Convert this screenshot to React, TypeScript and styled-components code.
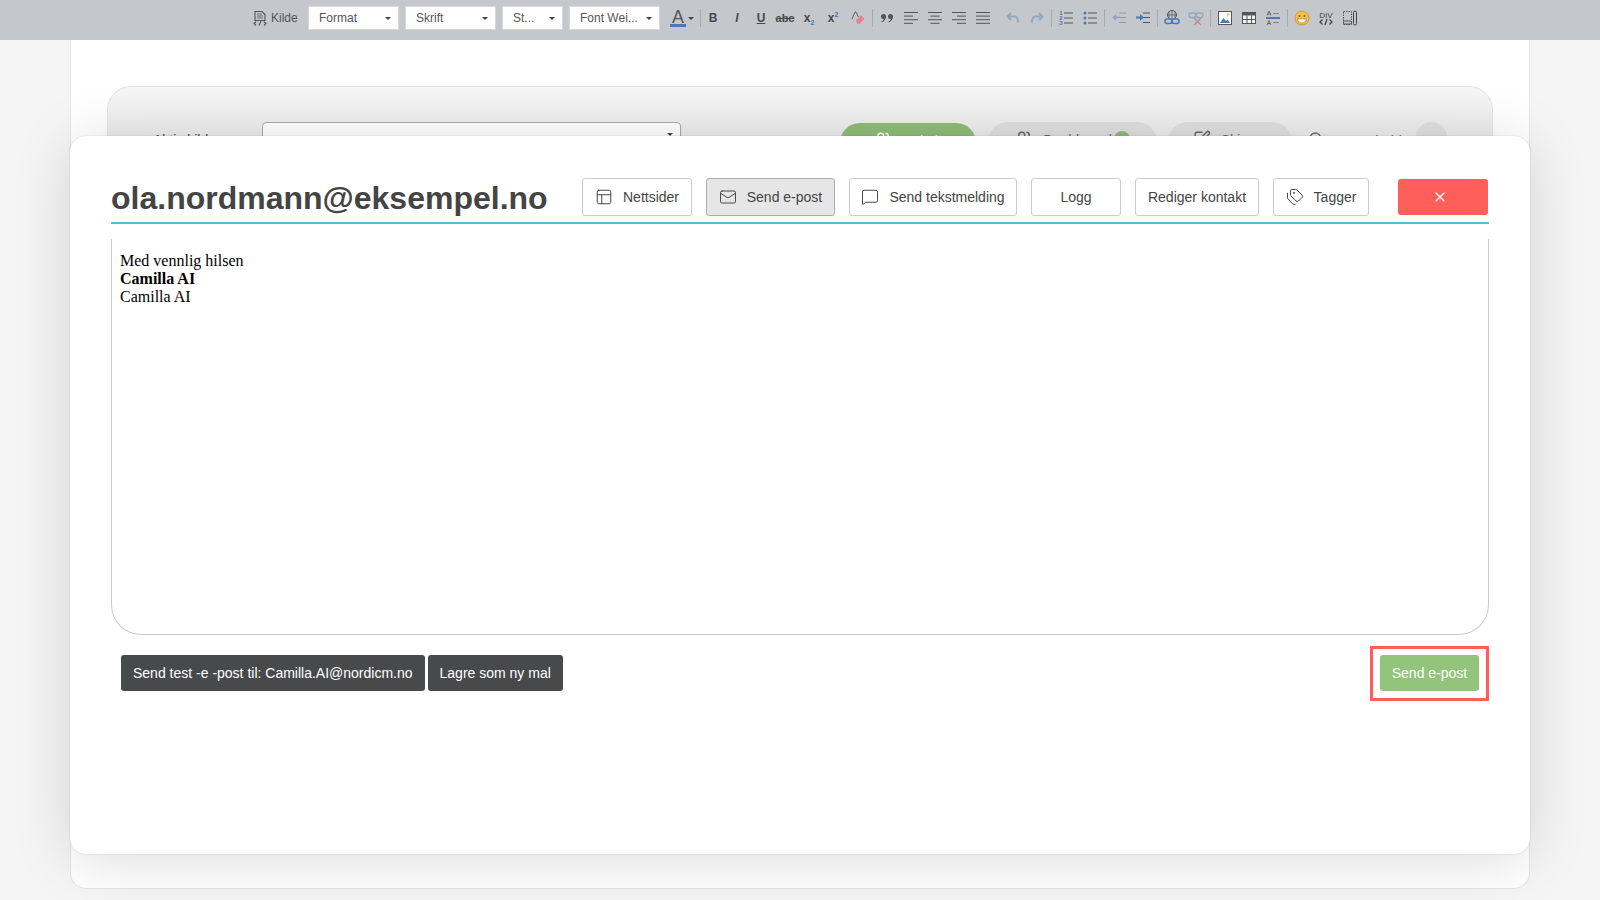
import { ReactNode } from 'react'
import styled, { createGlobalStyle } from 'styled-components'
import { PanelsTopLeft, Mail, MessageSquare, Tags, Users, X, SquarePen, Search } from 'lucide-react'

const GlobalStyle = createGlobalStyle`
  html, body {
    margin: 0;
    height: 100%;
    background: #f5f5f5;
    font-family: "Liberation Sans", Arial, sans-serif;
    overflow: hidden;
  }
`

const Page = styled.div`
  position: relative;
  display: flex;
  flex-direction: column;
  height: 900px;
  width: 1600px;
  overflow: hidden;
`

const Toolbar = styled.div`
  display: flex;
  align-items: center;
  box-sizing: border-box;
  height: 40px;
  padding: 0 0 4px 252px;
  background: #c4c8cd;
  flex-shrink: 0;
  color: #555;
  position: relative;
  z-index: 2;
`

const SourceButton = styled.div`
  display: flex;
  align-items: center;
  gap: 3px;
  width: 56px;
  font-size: 12px;
  color: #555;
`

const Combo = styled.div<{ $w: number }>`
  display: flex;
  align-items: center;
  justify-content: space-between;
  box-sizing: border-box;
  width: ${p => p.$w}px;
  height: 24px;
  margin-right: 6px;
  padding: 0 7px 0 10px;
  background: #fff;
  border: 1px solid #d6d8db;
  font-size: 12px;
  color: #555;
  white-space: nowrap;
`

const Caret = styled.span`
  width: 0;
  height: 0;
  border-left: 3px solid transparent;
  border-right: 3px solid transparent;
  border-top: 3px solid #444;
`

const ColorButton = styled.div`
  display: flex;
  align-items: center;
  gap: 2px;
  width: 32px;
  padding-left: 4px;
  box-sizing: border-box;
`

const ColorLetter = styled.span`
  padding: 0 2px;
  font-size: 18px;
  line-height: 14px;
  color: #555;
  border-bottom: 3px solid #4a79b3;
`

const Sep = styled.span<{ $hidden?: boolean; $wide?: boolean; $flush?: boolean }>`
  width: 1px;
  height: 18px;
  margin: 0 ${p => (p.$flush ? 0 : 2)}px 0 ${p => (p.$wide ? 3 : 2)}px;
  background: ${p => (p.$hidden ? 'transparent' : '#a6a9ad')};
`

const Cell = styled.div<{ $off?: boolean }>`
  display: flex;
  align-items: center;
  justify-content: center;
  width: 24px;
  height: 24px;
  opacity: ${p => (p.$off ? 0.4 : 1)};

  svg {
    display: block;
  }
`

const GlyphText = styled.span<{ $italic?: boolean; $under?: boolean; $strike?: boolean }>`
  font-family: "Liberation Sans", Arial, sans-serif;
  font-size: ${p => (p.$strike ? 11 : 12)}px;
  font-weight: 700;
  line-height: 14px;
  color: #4a4a4a;
  font-style: ${p => (p.$italic ? 'italic' : 'normal')};
  text-decoration: ${p => (p.$under ? 'underline' : p.$strike ? 'line-through' : 'none')};
`

const Script = styled.span`
  font-size: 12px;
  font-weight: 700;
  color: #4a4a4a;
  sub, sup {
    font-size: 7px;
    color: #4a79b3;
    line-height: 0;
  }
`

const Panel = styled.div`
  box-sizing: border-box;
  width: 1460px;
  height: 849px;
  margin-left: 70px;
  padding: 46px 36px 0;
  background: #fff;
  border: 1px solid #e4e5ea;
  border-top: 0;
  border-radius: 0 0 16px 16px;
`

const Card = styled.div`
  display: flex;
  align-items: flex-start;
  height: 200px;
  padding: 35px 0 0 45px;
  background: linear-gradient(#f6f6f6, #e9e9e9 60px);
  border: 1px solid #e2e3e8;
  border-radius: 24px 24px 0 0;
`

const FieldLabel = styled.span`
  width: 109px;
  margin-top: 10px;
  font-size: 14px;
  color: #444;
`

const FakeSelect = styled.div`
  display: flex;
  justify-content: flex-end;
  box-sizing: border-box;
  width: 419px;
  height: 36px;
  margin-right: 159px;
  padding: 10px 7px 0 0;
  background: #fff;
  border: 1px solid #a9a9a9;
  border-radius: 4px;
`

const Pill = styled.div<{ $w: number; $on?: boolean; $tight?: boolean }>`
  display: flex;
  align-items: flex-start;
  justify-content: center;
  gap: 10px;
  box-sizing: border-box;
  width: ${p => p.$w}px;
  height: 40px;
  margin-top: ${p => (p.$on ? 1 : 0)}px;
  margin-right: ${p => (p.$tight ? 11 : 12)}px;
  padding-top: 8px;
  border-radius: 20px;
  background: ${p => (p.$on ? '#8fbc78' : '#dfdfdf')};
  color: ${p => (p.$on ? '#fff' : '#666')};
  font-size: 14px;
`

const PillText = styled.span`
  margin-top: 2px;
`

const Badge = styled.span`
  width: 16px;
  height: 16px;
  margin-top: 1px;
  margin-left: -8px;
  border-radius: 50%;
  background: #8fbc78;
`

const PlainLink = styled.div`
  display: flex;
  align-items: flex-start;
  gap: 10px;
  margin: 9px 0 0 4px;
  width: 108px;
  font-size: 14px;
  color: #666;
`

const RoundButton = styled.div`
  width: 31px;
  height: 40px;
  border-radius: 16px;
  background: #dfdfdf;
`

const Modal = styled.div`
  position: absolute;
  left: 70px;
  top: 136px;
  display: flex;
  flex-direction: column;
  box-sizing: border-box;
  width: 1460px;
  height: 718px;
  padding: 42px 41px 0 41px;
  background: #fff;
  border-radius: 16px;
  box-shadow: 0 0 2px rgba(60, 70, 110, 0.2), 0 6px 60px rgba(0, 0, 0, 0.14);
`

const Header = styled.div`
  display: flex;
  align-items: flex-start;
  gap: 14px;
  height: 44px;
  border-bottom: 2px solid #5bbcd8;
`

const Title = styled.h1`
  flex: 1;
  margin: 0;
  font-size: 32px;
  line-height: 40px;
  font-weight: 700;
  color: #444;
  white-space: nowrap;
`

const HeadButton = styled.button<{ $w: number; $active?: boolean }>`
  display: flex;
  align-items: center;
  justify-content: center;
  gap: 10px;
  box-sizing: border-box;
  width: ${p => p.$w}px;
  height: 38px;
  padding: 0;
  background: ${p => (p.$active ? '#e6e6e6' : '#fff')};
  border: 1px solid ${p => (p.$active ? '#adadad' : '#ccc')};
  border-radius: 3px;
  color: #444;
  font-family: inherit;
  font-size: 14px;
`

const CloseButton = styled.button`
  display: flex;
  align-items: center;
  justify-content: center;
  width: 90px;
  height: 36px;
  margin: 1px 1px 0 15px;
  padding: 0 7px 0 0;
  background: #ff5f5a;
  border: 0;
  border-radius: 3px;
  color: #fff;
`

const Editor = styled.div`
  box-sizing: border-box;
  height: 396px;
  margin-top: 15px;
  padding: 13px 8px 0;
  background: #fff;
  border: 1px solid #ccc;
  border-top: 0;
  border-radius: 0 0 30px 30px;
  font-family: "Liberation Serif", "Times New Roman", serif;
  font-size: 16px;
  line-height: 18px;
  color: #000;
`

const Footer = styled.div`
  display: flex;
  align-items: flex-start;
  justify-content: space-between;
  margin-top: 11px;
  padding-left: 10px;
`

const ButtonGroup = styled.div`
  display: flex;
  gap: 3px;
  margin-top: 9px;
`

const ActionButton = styled.button<{ $green?: boolean }>`
  height: 36px;
  padding: 0 12px;
  background: ${p => (p.$green ? '#92c47c' : '#48494b')};
  border: 0;
  border-radius: 3px;
  color: #fff;
  font-family: inherit;
  font-size: 14px;
  white-space: nowrap;
`

const Highlight = styled.div`
  display: flex;
  box-sizing: border-box;
  width: 119px;
  height: 55px;
  padding-top: 6px;
  align-items: flex-start;
  justify-content: center;
  border: 3px solid #ff5f5a;
`

const stroke = { fill: 'none', stroke: '#555', strokeWidth: 1.1 }
const blue = '#4a79b3'

const Icon = ({ children, size = 16 }: { children: ReactNode; size?: number }) => (
  <svg width={size} height={size} viewBox='0 0 16 16'>
    {children}
  </svg>
)

const Lines = ({ rows }: { rows: [number, number][] }) => (
  <Icon>
    {rows.map(([x, w], i) => (
      <rect key={i} x={x} y={2 + i * 3.6} width={w} height='1' fill='#555' />
    ))}
  </Icon>
)

const ListRows = () => (
  <>
    <rect x='6' y='2.5' width='9' height='1' fill='#555' />
    <rect x='6' y='7.5' width='9' height='1' fill='#555' />
    <rect x='6' y='12.5' width='9' height='1' fill='#555' />
  </>
)

const Digit = ({ y, n }: { y: number; n: number }) => (
  <text x='3' y={y} textAnchor='middle' fontSize='6' fontWeight='700' fontFamily='Liberation Sans' fill={blue}>
    {n}
  </text>
)

function App() {
  return (
    <>
      <GlobalStyle />
      <Page>
        <Toolbar>
          <SourceButton>
            <Icon>
              <path d='M3 1.5h7l3 3v6H3z' {...stroke} />
              <path d='M5 4h5M5 6h6M5 8h6' {...stroke} strokeWidth={0.8} />
              <path d='M4 11.5l-2 2 2 2M12 11.5l2 2-2 2M9 11l-2 4.5' {...stroke} />
            </Icon>
            Kilde
          </SourceButton>
          <Combo $w={91}>Format<Caret /></Combo>
          <Combo $w={91}>Skrift<Caret /></Combo>
          <Combo $w={61}>St...<Caret /></Combo>
          <Combo $w={91}>Font Wei...<Caret /></Combo>
          <ColorButton>
            <ColorLetter>A</ColorLetter>
            <Caret />
          </ColorButton>
          <Sep $flush />
          <Cell><GlyphText>B</GlyphText></Cell>
          <Cell><GlyphText $italic>I</GlyphText></Cell>
          <Cell><GlyphText $under>U</GlyphText></Cell>
          <Cell><GlyphText $strike>abc</GlyphText></Cell>
          <Cell><Script>x<sub>2</sub></Script></Cell>
          <Cell><Script>x<sup>2</sup></Script></Cell>
          <Cell>
            <Icon>
              <path d='M3 9l3-7h1l2.5 5' {...stroke} strokeWidth={0.9} />
              <path d='M7 10.5l5-5 3.5 3-5 5.5H8.5z' fill='#e8808f' />
            </Icon>
          </Cell>
          <Sep $wide />
          <Cell>
            <Icon>
              <circle cx='4.5' cy='6.5' r='2.5' fill='#555' />
              <path d='M6.8 6.5c0 3-1.5 5-4 6l-.4-.8c1.8-1 2.6-2.4 2.6-4z' fill='#555' />
              <circle cx='11.5' cy='6.5' r='2.5' fill='#555' />
              <path d='M13.8 6.5c0 3-1.5 5-4 6l-.4-.8c1.8-1 2.6-2.4 2.6-4z' fill='#555' />
            </Icon>
          </Cell>
          <Cell><Lines rows={[[1, 14], [1, 9], [1, 14], [1, 9]]} /></Cell>
          <Cell><Lines rows={[[1, 14], [3.5, 9], [1, 14], [3.5, 9]]} /></Cell>
          <Cell><Lines rows={[[1, 14], [6, 9], [1, 14], [6, 9]]} /></Cell>
          <Cell><Lines rows={[[1, 14], [1, 14], [1, 14], [1, 14]]} /></Cell>
          <Sep $hidden $wide />
          <Cell $off>
            <Icon>
              <path d='M6 3L2.5 6.5 6 10' fill='none' stroke={blue} strokeWidth='2' />
              <path d='M3 6.5h6a4 4 0 0 1 4 4v2' fill='none' stroke={blue} strokeWidth='2' />
            </Icon>
          </Cell>
          <Cell $off>
            <Icon>
              <path d='M10 3l3.5 3.5L10 10' fill='none' stroke={blue} strokeWidth='2' />
              <path d='M13 6.5H7a4 4 0 0 0-4 4v2' fill='none' stroke={blue} strokeWidth='2' />
            </Icon>
          </Cell>
          <Sep />
          <Cell>
            <Icon>
              <ListRows />
              <Digit y={5} n={1} />
              <Digit y={10} n={2} />
              <Digit y={15} n={3} />
            </Icon>
          </Cell>
          <Cell>
            <Icon>
              <ListRows />
              <circle cx='3' cy='3' r='1.5' fill={blue} />
              <circle cx='3' cy='8' r='1.5' fill={blue} />
              <circle cx='3' cy='13' r='1.5' fill={blue} />
            </Icon>
          </Cell>
          <Sep />
          <Cell $off>
            <Icon>
              <rect x='8' y='2.5' width='7' height='1' fill='#555' />
              <rect x='8' y='7' width='7' height='1' fill='#555' />
              <rect x='8' y='12' width='7' height='1' fill='#555' />
              <path d='M1 7.5L5 4v2.5h3v2H5V11z' fill={blue} />
            </Icon>
          </Cell>
          <Cell>
            <Icon>
              <rect x='8' y='2.5' width='7' height='1' fill='#555' />
              <rect x='8' y='7' width='7' height='1' fill='#555' />
              <rect x='8' y='12' width='7' height='1' fill='#555' />
              <path d='M9 7.5L5 4v2.5H1v2h4V11z' fill={blue} />
            </Icon>
          </Cell>
          <Sep />
          <Cell>
            <Icon>
              <circle cx='8' cy='5' r='4.5' fill='none' stroke='#555' />
              <path d='M3.5 5h9M8 .5v9M5 1.5v7M11 1.5v7' stroke='#555' strokeWidth='.7' />
              <rect x='1' y='9' width='7' height='4.5' rx='2.2' fill='none' stroke={blue} strokeWidth='1.6' />
              <rect x='8' y='9' width='7' height='4.5' rx='2.2' fill='none' stroke={blue} strokeWidth='1.6' />
            </Icon>
          </Cell>
          <Cell $off>
            <Icon>
              <rect x='1' y='3' width='7' height='4.5' rx='2.2' fill='none' stroke={blue} strokeWidth='1.6' />
              <rect x='8' y='3' width='7' height='4.5' rx='2.2' fill='none' stroke={blue} strokeWidth='1.6' />
              <path d='M6 8l7 7M13 8l-7 7' stroke='#c0392b' strokeWidth='1.6' />
            </Icon>
          </Cell>
          <Sep />
          <Cell>
            <Icon>
              <rect x='1.5' y='1.5' width='13' height='13' fill='#fff' stroke='#555' />
              <path d='M3 13l3.5-5 2.5 3 1.5-1.5L13 13z' fill={blue} />
              <circle cx='11' cy='4.5' r='1.2' fill='#e9b872' />
            </Icon>
          </Cell>
          <Cell>
            <Icon>
              <rect x='1.5' y='2.5' width='13' height='11' fill='#f2f2f2' stroke='#555' />
              <rect x='1.5' y='2.5' width='13' height='3' fill='#555' />
              <path d='M6 5.5v8M10.5 5.5v8M1.5 9.5h13' stroke='#555' />
            </Icon>
          </Cell>
          <Cell>
            <Icon>
              <rect x='1' y='7' width='14' height='2' fill={blue} />
              <path d='M2 5.5L4 1l2 4.5M2.8 4h2.4M2 15l2-4.5 2 4.5M2.8 13.5h2.4' fill='none' stroke='#555' strokeWidth='.8' />
              <path d='M8 3.5h6M8 12.5h6' stroke='#888' />
            </Icon>
          </Cell>
          <Sep />
          <Cell>
            <Icon>
              <circle cx='8' cy='8' r='7' fill='#f2c04c' stroke='#d8962a' />
              <circle cx='5.5' cy='6' r='1' fill='#8a5a12' />
              <circle cx='10.5' cy='6' r='1' fill='#8a5a12' />
              <path d='M3.5 9h9a4.5 4 0 0 1-9 0z' fill='#fff' stroke='#8a5a12' strokeWidth='.5' />
            </Icon>
          </Cell>
          <Cell>
            <Icon>
              <text x='8' y='7.5' textAnchor='middle' fontSize='8' fontFamily='Liberation Sans' fill='#444'>DIV</text>
              <path d='M4.5 9.5L2 12l2.5 2.5M11.5 9.5L14 12l-2.5 2.5M9 9l-2 6' {...stroke} strokeWidth={1.3} stroke='#444' />
            </Icon>
          </Cell>
          <Cell>
            <Icon>
              <rect x='1.5' y='1.5' width='8' height='13' fill='none' stroke='#555' strokeDasharray='1.5 1' />
              <rect x='1.5' y='11' width='8' height='3' rx='1' fill='none' stroke='#555' />
              <rect x='11.5' y='1' width='3' height='14' rx='1.5' fill='none' stroke='#444' />
            </Icon>
          </Cell>
        </Toolbar>

        <Panel>
          <Card>
            <FieldLabel>Aktiv kilde</FieldLabel>
            <FakeSelect><Caret /></FakeSelect>
            <Pill $w={136} $on><Users size={18} /><PillText>Deltak</PillText></Pill>
            <Pill $w={169} $tight><Users size={18} /><PillText>Dashboard</PillText><Badge /></Pill>
            <Pill $w={124}><SquarePen size={18} /><PillText>Skjema</PillText></Pill>
            <PlainLink><Search size={16} /><PillText>Samarbeid</PillText></PlainLink>
            <RoundButton />
          </Card>
        </Panel>

        <Modal>
          <Header>
            <Title>ola.nordmann@eksempel.no</Title>
            <HeadButton $w={110}><PanelsTopLeft size={18} strokeWidth={1.3} />Nettsider</HeadButton>
            <HeadButton $w={129} $active><Mail size={18} strokeWidth={1.3} />Send e-post</HeadButton>
            <HeadButton $w={168}><MessageSquare size={18} strokeWidth={1.3} />Send tekstmelding</HeadButton>
            <HeadButton $w={90}>Logg</HeadButton>
            <HeadButton $w={124}>Rediger kontakt</HeadButton>
            <HeadButton $w={96}><Tags size={18} strokeWidth={1.3} />Tagger</HeadButton>
            <CloseButton><X size={16} strokeWidth={1.8} /></CloseButton>
          </Header>
          <Editor>
            Med vennlig hilsen
            <br />
            <strong>Camilla AI</strong>
            <br />
            Camilla AI
          </Editor>
          <Footer>
            <ButtonGroup>
              <ActionButton>Send test -e -post til: Camilla.AI@nordicm.no</ActionButton>
              <ActionButton>Lagre som ny mal</ActionButton>
            </ButtonGroup>
            <Highlight>
              <ActionButton $green>Send e-post</ActionButton>
            </Highlight>
          </Footer>
        </Modal>
      </Page>
    </>
  )
}

export default App
